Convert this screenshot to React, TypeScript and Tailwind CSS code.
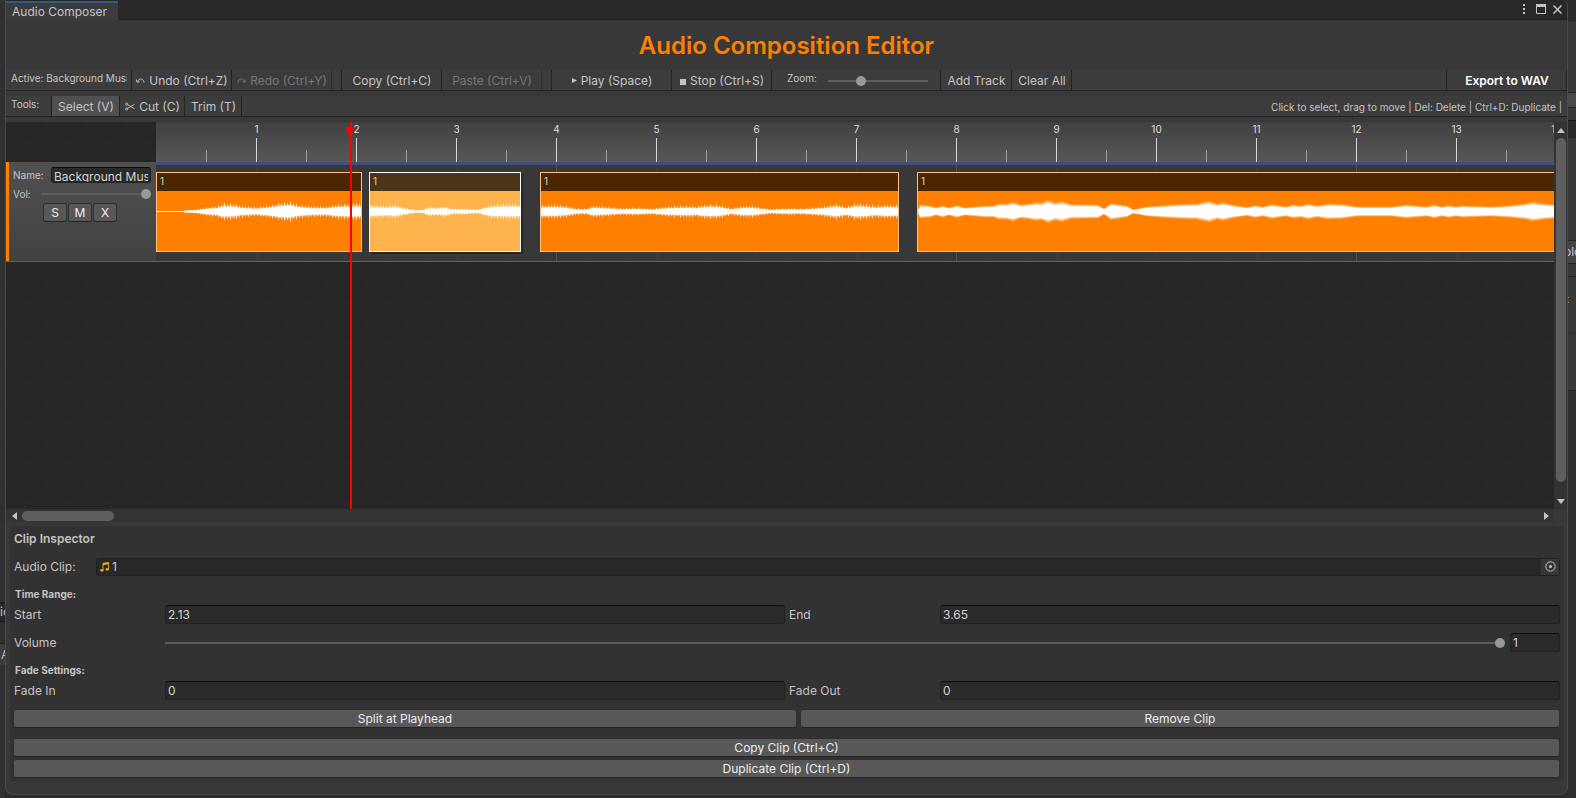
import { useState } from "react";
import type { ReactNode } from "react";

const PX_PER_SECOND = 100;

type Clip = {
  start: number;
  end: number;
  selected?: boolean;
  smooth?: boolean;
  // [x offset inside the clip, half height]
  wave: [number, number][];
};

const clips: Clip[] = [
  {
    start: 0,
    end: 2.06,
    wave: [[0, 0.5], [26, 0.5], [28, 1.5], [39, 2], [48, 4], [60, 5.5], [66, 8.5], [77, 8], [84, 6], [99, 4.5], [114, 6.5], [123, 9], [133, 10], [141, 7], [154, 5.5], [169, 5], [179, 7], [189, 8], [196, 8.5], [206, 8]],
  },
  {
    start: 2.13,
    end: 3.65,
    selected: true,
    wave: [[0, 7], [16, 6], [26, 7], [31, 5], [39, 3], [46, 1.5], [53, 2], [58, 5], [67, 4.5], [75, 5.5], [83, 3], [93, 3.5], [101, 2.5], [109, 2.5], [115, 5], [123, 7], [136, 8], [152, 7.5]],
  },
  {
    start: 3.84,
    end: 7.43,
    wave: [[0, 6.5], [15, 7], [25, 6], [35, 3.5], [45, 3], [52, 6], [65, 5], [80, 3.5], [95, 4], [110, 3], [125, 5], [140, 6], [150, 6], [155, 5], [160, 6.5], [170, 7.5], [180, 6.5], [190, 3.5], [200, 5.5], [210, 6], [220, 4], [230, 2.5], [237, 3], [250, 3.5], [260, 3], [272, 4], [285, 5.5], [295, 8], [305, 5], [315, 8.5], [325, 7.5], [335, 6], [345, 7], [359, 6.5]],
  },
  {
    start: 7.61,
    end: 20,
    smooth: true,
    wave: [[0, 1], [2, 7], [12, 6], [18, 4], [25, 6], [31, 4], [39, 6.5], [47, 4], [68, 6], [76, 6], [80, 8], [88, 8], [95, 10], [103, 7], [111, 8], [117, 9.5], [124, 9], [130, 12], [137, 9], [144, 10.5], [153, 7.5], [180, 7], [186, 3], [193, 8.5], [209, 6], [215, 2], [229, 5], [242, 6], [262, 7.5], [279, 8], [291, 11], [299, 8], [305, 9.5], [314, 7], [329, 4.5], [337, 6.5], [345, 5], [354, 7.5], [368, 5], [375, 7], [383, 6], [390, 8], [399, 6], [410, 8], [424, 7.5], [439, 5], [474, 5], [488, 7], [509, 5], [516, 7], [524, 5], [531, 6.5], [538, 5], [544, 6], [573, 5], [590, 6], [607, 8], [615, 10], [627, 8], [639, 7], [700, 6], [760, 8], [1239, 6]],
  },
];

const MID = 20.5;

function ampAt(wave: [number, number][], x: number) {
  for (let i = 1; i < wave.length; i++) {
    const [x1, y1] = wave[i];
    const [x0, y0] = wave[i - 1];
    if (x <= x1) return y0 + ((y1 - y0) * (x - x0)) / (x1 - x0);
  }
  return wave[wave.length - 1][1];
}

function outline(wave: [number, number][], scale: number) {
  const top = wave.map(([x, a]) => `${x},${MID - a * scale}`);
  const bottom = wave.map(([x, a]) => `${x},${MID + a * scale}`).reverse();
  return [...top, ...bottom].join(" ");
}

function Waveform({ clip, width }: { clip: Clip; width: number }) {
  const bars: { x: number; h: number }[] = [];
  if (!clip.smooth) {
    for (let x = 1; x < width; x += 3) {
      const a = ampAt(clip.wave, x);
      if (a > 1) bars.push({ x, h: a * (x % 2 ? 1 : 0.88) });
    }
  }
  return (
    <svg width={width} height="40" viewBox={`0 0 ${width} 40`} fill="white" aria-hidden="true">
      {clip.smooth ? (
        <>
          <polygon points={outline(clip.wave, 1)} opacity="0.2" />
          <polygon points={outline(clip.wave, 0.9)} opacity="0.3" />
          <polygon points={outline(clip.wave, 0.8)} opacity="0.5" />
          <polygon points={outline(clip.wave, 0.7)} />
        </>
      ) : (
        <>
          <polygon points={outline(clip.wave, 0.75)} opacity="0.3" />
          <polygon points={outline(clip.wave, 0.6)} />
          <rect x="0" y="20" width={width} height="1" />
          {bars.map((b) => (
            <rect key={b.x} x={b.x} y={MID - b.h} width="1" height={b.h * 2} opacity="0.75" />
          ))}
        </>
      )}
    </svg>
  );
}

function ClipView({ clip }: { clip: Clip }) {
  const width = Math.round((clip.end - clip.start) * PX_PER_SECOND);
  return (
    <div
      className={
        clip.selected
          ? "absolute top-[10px] h-20 overflow-hidden border border-white bg-[#ffb34d] shadow-[2px_2px_0_#262626]"
          : "absolute top-[10px] h-20 overflow-hidden border border-[#ffbf80] bg-[#ff8000]"
      }
      style={{ left: clip.start * PX_PER_SECOND, width }}
    >
      <div className="h-[18px] bg-black/70 px-[3px] text-[10px] leading-4 text-[#d2d2d2]">1</div>
      <Waveform clip={clip} width={width} />
    </div>
  );
}

function ToolButton({ className, children, disabled }: { className: string; children: ReactNode; disabled?: boolean }) {
  return (
    <button
      disabled={disabled}
      className={`flex h-5 shrink-0 items-center justify-center gap-1 border-r border-[#232323] pt-px pl-px whitespace-nowrap disabled:border-[#303030] disabled:text-[#757575] ${className}`}
    >
      {children}
    </button>
  );
}

function ActionButton({ className = "", children }: { className?: string; children: ReactNode }) {
  return (
    <button className={`h-[19px] rounded-[3px] border border-[#303030] border-b-[#242424] bg-[#585858] leading-[17px] text-[#eeeeee] ${className}`}>
      {children}
    </button>
  );
}

const field =
  "min-w-0 rounded-[3px] border border-[#212121] border-t-[#0d0d0d] bg-[#2a2a2a] px-[2px] text-xs text-[#d2d2d2] outline-none";
const range =
  "h-3 min-w-0 appearance-none bg-transparent bg-[linear-gradient(#5e5e5e,#5e5e5e)] bg-[length:100%_2px] bg-center bg-no-repeat outline-none [&::-webkit-slider-thumb]:size-[10px] [&::-webkit-slider-thumb]:appearance-none [&::-webkit-slider-thumb]:rounded-full [&::-webkit-slider-thumb]:bg-[#999999]";

function NumberField({ id, label, initial }: { id: string; label: string; initial: string }) {
  const [value, setValue] = useState(initial);
  return (
    <div className="flex flex-1 items-center">
      <label htmlFor={id} className="w-[151px] shrink-0">{label}</label>
      <input id={id} value={value} onChange={(e) => setValue(e.target.value)} className={`h-[19px] flex-1 ${field}`} />
    </div>
  );
}

function Ruler() {
  const marks = Array.from({ length: 28 }, (_, i) => (i + 1) / 2);
  return (
    <div className="relative h-10 overflow-hidden bg-linear-to-b from-[#404040] to-[#585858]">
      {marks.map((t) =>
        t % 1 === 0 ? (
          <div key={t} className="absolute inset-y-0 w-px" style={{ left: t * PX_PER_SECOND }}>
            <span className="flex justify-center text-[10px] leading-[14px] text-[#dddddd]">{t}</span>
            <span className="absolute bottom-0 left-0 h-6 w-px bg-[#d8d8d8]" />
          </div>
        ) : (
          <div key={t} className="absolute bottom-0 h-3 w-px bg-[#999999]" style={{ left: t * PX_PER_SECOND }} />
        )
      )}
    </div>
  );
}

function TrackHeader() {
  const [name, setName] = useState("Background Music");
  return (
    <div className="flex h-[99px] border-l-[3px] border-[#ff8000] bg-linear-to-b from-[#505050] to-[#424242] pt-[5px] pr-[5px] pl-1">
      <div className="flex min-w-0 flex-1 flex-col">
        <div className="flex items-center">
          <label htmlFor="track-name" className="w-[38px] text-[10px] leading-4">Name:</label>
          <input id="track-name" value={name} onChange={(e) => setName(e.target.value)} className={`h-4 flex-1 pt-[3px] ${field}`} />
        </div>
        <div className="mt-[5px] flex items-center">
          <label htmlFor="track-vol" className="w-7 text-[10px] leading-3">Vol:</label>
          <input id="track-vol" type="range" min="0" max="1" step="0.01" defaultValue="1" className={`flex-1 ${range}`} />
        </div>
        <div className="mt-[3px] flex gap-px pl-[30px]">
          {["S", "M", "X"].map((b) => (
            <ActionButton key={b} className="w-6">{b}</ActionButton>
          ))}
        </div>
      </div>
    </div>
  );
}

function Timeline() {
  const lines = Array.from({ length: 14 }, (_, i) => i + 1);
  return (
    <div className="flex min-h-0 flex-1 flex-col">
      <div className="flex flex-1">
        <div className="flex min-w-0 flex-1 bg-[#262626] [background-image:radial-gradient(circle_at_1px_1px,#2b2b2b_1px,transparent_1px),radial-gradient(circle_at_21px_21px,#2b2b2b_1px,transparent_1px)] [background-size:40px_40px]">
          <div className="w-[150px] shrink-0 pt-10">
            <TrackHeader />
            <div className="h-px bg-[#606060]" />
          </div>
          <div className="relative min-w-0 flex-1 overflow-hidden">
            <Ruler />
            <div className="relative h-[100px] overflow-hidden border-b border-[#606060] bg-[#383838]">
              {lines.map((n) => (
                <div
                  key={n}
                  className={n % 4 === 0 ? "absolute inset-y-0 w-px bg-[#505050]" : "absolute inset-y-0 w-px bg-[#3e3e3e]"}
                  style={{ left: n * PX_PER_SECOND }}
                />
              ))}
              <div className="relative h-[3px] bg-[#414f7a]" />
              {clips.map((c) => (
                <ClipView key={c.start} clip={c} />
              ))}
            </div>
            <div className="absolute inset-y-0 left-[194px] w-[2px] bg-[#ff0000]">
              <svg width="10" height="10" viewBox="0 0 10 10" className="absolute top-[5px] -left-[5px] max-w-none" aria-hidden="true">
                <path d="M0 0h10L5 10z" fill="#ff0000" />
              </svg>
            </div>
          </div>
        </div>
        <div className="flex w-[13px] shrink-0 flex-col items-center bg-[#333333]">
          <button aria-label="Scroll up" className="flex h-4 w-full items-center justify-center">
            <svg width="8" height="5" viewBox="0 0 8 5" aria-hidden="true"><path d="M4 0l4 5H0z" fill="#c4c4c4" /></svg>
          </button>
          <div className="w-[10px] flex-1 rounded-full bg-[#5f5f5f]" />
          <button aria-label="Scroll down" className="flex h-[27px] w-full items-center justify-center pt-3">
            <svg width="8" height="5" viewBox="0 0 8 5" aria-hidden="true"><path d="M4 5l4-5H0z" fill="#c4c4c4" /></svg>
          </button>
        </div>
      </div>
      <div className="mr-[13px] flex h-[13px] items-center bg-[#333333]">
        <button aria-label="Scroll left" className="flex h-full w-4 items-center justify-center">
          <svg width="5" height="8" viewBox="0 0 5 8" aria-hidden="true"><path d="M0 4l5-4v8z" fill="#c4c4c4" /></svg>
        </button>
        <div className="h-[10px] w-[92px] rounded-full bg-[#5f5f5f]" />
        <button aria-label="Scroll right" className="ml-auto flex h-full w-4 items-center justify-center">
          <svg width="5" height="8" viewBox="0 0 5 8" aria-hidden="true"><path d="M5 4L0 0v8z" fill="#c4c4c4" /></svg>
        </button>
      </div>
    </div>
  );
}

function Toolbar() {
  return (
    <div className="flex border-b border-[#232323] bg-[#3c3c3c]">
      <div className="w-[126px] shrink-0 border-r border-[#232323] pr-1 pl-[5px] text-[10px] leading-[17px]">
        <div className="overflow-hidden whitespace-nowrap">Active: Background Music</div>
      </div>
      <ToolButton className="w-[100px]">
        <svg width="9" height="5" viewBox="0 0 9 5" fill="none" stroke="currentColor" aria-hidden="true">
          <path d="M8 4.500C7.800.5 3 0 1.800 3M.5 1.500L1 4.300l2.600-.6" />
        </svg>
        Undo (Ctrl+Z)
      </ToolButton>
      <ToolButton className="w-[100px]" disabled>
        <svg width="9" height="5" viewBox="0 0 9 5" fill="none" stroke="currentColor" aria-hidden="true">
          <path d="M1 4.500C1.200.5 6 0 7.200 3M8.500 1.500L8 4.300l-2.600-.6" />
        </svg>
        Redo (Ctrl+Y)
      </ToolButton>
      <div className="w-[10px] shrink-0 border-r border-[#232323]" />
      <ToolButton className="w-[100px]">Copy (Ctrl+C)</ToolButton>
      <ToolButton className="w-[100px]" disabled>Paste (Ctrl+V)</ToolButton>
      <div className="w-[10px] shrink-0 border-r border-[#232323]" />
      <ToolButton className="w-[120px]">
        <svg width="5" height="5" viewBox="0 0 5 5" aria-hidden="true"><path d="M0 0l5 2.500L0 5z" fill="currentColor" /></svg>
        Play (Space)
      </ToolButton>
      <ToolButton className="w-[100px]">
        <svg width="6" height="6" viewBox="0 0 6 6" className="mt-[2px]" aria-hidden="true"><path d="M0 0h6v6H0z" fill="currentColor" /></svg>
        Stop (Ctrl+S)
      </ToolButton>
      <div className="flex w-[169px] shrink-0 border-r border-[#232323] pl-[15px]">
        <label htmlFor="zoom" className="w-[41px] text-[10px] leading-[17px]">Zoom:</label>
        <input id="zoom" type="range" min="0" max="100" defaultValue="31" className={`mt-[5px] w-[100px] ${range}`} />
      </div>
      <ToolButton className="w-[71px]">Add Track</ToolButton>
      <ToolButton className="w-[60px]">Clear All</ToolButton>
      <ToolButton className="ml-auto w-[121px] border-l font-semibold text-white">Export to WAV</ToolButton>
    </div>
  );
}

function ToolsRow() {
  return (
    <div className="mt-[5px] flex border-b border-[#232323] bg-[#3c3c3c]">
      <div className="w-[46px] shrink-0 border-r border-[#232323] pl-[5px] text-[10px] leading-[17px]">Tools:</div>
      <ToolButton className="w-[68px] bg-[#505050]">Select (V)</ToolButton>
      <ToolButton className="w-[65px]">
        <svg width="10" height="9" viewBox="0 0 11 9" fill="none" stroke="currentColor" aria-hidden="true">
          <path d="M3 2.500L10.500 7M3 6.500L10.500 2" />
          <circle cx="1.800" cy="1.800" r="1.200" />
          <circle cx="1.800" cy="7.200" r="1.200" />
        </svg>
        Cut (C)
      </ToolButton>
      <ToolButton className="w-[57px]">Trim (T)</ToolButton>
      <div className="ml-auto pt-[3px] pr-[5px] text-[10px] leading-4 whitespace-nowrap">
        Click to select, drag to move | Del: Delete | Ctrl+D: Duplicate |
      </div>
    </div>
  );
}

function Inspector() {
  const [volume, setVolume] = useState("1");
  return (
    <section className="mx-1 mt-1 flex flex-col bg-[#323232] pt-[5px] pr-[3px] pb-[3px] pl-1">
      <h2 className="leading-4 font-semibold">Clip Inspector</h2>
      <div className="mt-[10px] flex h-[19px] items-center">
        <span className="w-[82px] shrink-0">Audio Clip:</span>
        <div className="flex h-[18px] min-w-0 flex-1 items-center rounded-[3px] border border-[#212121] bg-[#282828] pl-[3px] text-[#d2d2d2]">
          <svg width="9" height="10" viewBox="0 0 9 10" aria-hidden="true">
            <path d="M3 8V1.500L8.500.5V7" fill="none" stroke="#e0a81c" />
            <path d="M3 1l5.500-.7v2L3 3.200z" fill="#e0a81c" />
            <ellipse cx="1.800" cy="8.300" rx="1.700" ry="1.400" fill="#e0a81c" />
            <ellipse cx="7.200" cy="7.300" rx="1.700" ry="1.400" fill="#e0a81c" />
          </svg>
          <span className="ml-[3px] flex-1">1</span>
          <button aria-label="Pick audio clip" className="flex h-full w-[18px] items-center justify-center bg-[#373737]">
            <svg width="11" height="11" viewBox="0 0 11 11" fill="none" aria-hidden="true">
              <circle cx="5.500" cy="5.500" r="4.700" stroke="#c4c4c4" />
              <circle cx="5.500" cy="5.500" r="1.500" fill="#c4c4c4" />
            </svg>
          </button>
        </div>
      </div>
      <h3 className="mt-[10px] pl-px text-[10px] leading-4 font-bold">Time Range:</h3>
      <div className="mt-[3px] flex gap-1">
        <NumberField id="start" label="Start" initial="2.13" />
        <NumberField id="end" label="End" initial="3.65" />
      </div>
      <div className="mt-[9px] flex items-center">
        <label htmlFor="volume" className="w-[151px] shrink-0">Volume</label>
        <input
          id="volume"
          type="range"
          min="0"
          max="1"
          step="0.01"
          value={volume}
          onChange={(e) => setVolume(e.target.value)}
          className={`flex-1 ${range}`}
        />
        <input aria-label="Volume value" value={volume} onChange={(e) => setVolume(e.target.value)} className={`ml-[5px] h-[19px] w-[50px] ${field}`} />
      </div>
      <h3 className="mt-[10px] pl-px text-[10px] leading-4 font-bold">Fade Settings:</h3>
      <div className="mt-[3px] flex gap-1">
        <NumberField id="fade-in" label="Fade In" initial="0" />
        <NumberField id="fade-out" label="Fade Out" initial="0" />
      </div>
      <div className="-ml-px flex flex-col">
        <div className="mt-[9px] flex gap-[3px]">
          <ActionButton className="flex-[784]">Split at Playhead</ActionButton>
          <ActionButton className="flex-[760]">Remove Clip</ActionButton>
        </div>
        <ActionButton className="mt-[10px]">Copy Clip (Ctrl+C)</ActionButton>
        <ActionButton className="mt-[2px]">Duplicate Clip (Ctrl+D)</ActionButton>
      </div>
    </section>
  );
}

export default function App() {
  return (
    <div className="flex min-h-screen bg-[#2c2c2c] font-['Inter',sans-serif] text-xs text-[#c4c4c4]">
      {/* slivers of the editor behind the floating window */}
      <div className="flex w-[5px] shrink-0 flex-col justify-end overflow-hidden bg-[#303030] pb-[133px]">
        <div className="flex h-5 items-center border-y border-[#1c1c1c] bg-[#282828]">ic</div>
        <div className="mt-[21px] flex h-[22px] items-center border-t border-[#232323] bg-[#3c3c3c] pl-px">A</div>
      </div>
      <div className="mb-[3px] flex min-w-0 flex-1 flex-col overflow-hidden rounded-b-lg rounded-tr-md border-x border-b border-[#4a4a4a] bg-[#383838]">
        <header className="flex h-5 border-b border-[#232323] bg-[#282828] pt-px">
          <div className="h-[19px] w-[112px] border-t-2 border-[#2c5d87] bg-[#3c3c3c] pl-[6px] leading-[18px]">Audio Composer</div>
          <div className="ml-auto flex items-center gap-[7px] pr-[5px] pb-[2px]">
            <button aria-label="Menu">
              <svg width="3" height="10" viewBox="0 0 3 10" fill="#c4c4c4" aria-hidden="true">
                <path d="M0 0h2v2H0zM0 4h2v2H0zM0 8h2v2H0z" />
              </svg>
            </button>
            <button aria-label="Maximize" className="pl-[3px]">
              <svg width="10" height="10" viewBox="0 0 10 10" fill="none" stroke="#c4c4c4" aria-hidden="true">
                <path d="M.5.5h9v9h-9z" />
                <path d="M0 1.500h10" strokeWidth="3" />
              </svg>
            </button>
            <button aria-label="Close">
              <svg width="9" height="9" viewBox="0 0 9 9" stroke="#c4c4c4" strokeWidth="1.500" aria-hidden="true">
                <path d="M.5.5l8 8M8.500.5l-8 8" />
              </svg>
            </button>
          </div>
        </header>
        <h1 className="flex h-[50px] items-center justify-center pt-[2px] text-2xl font-semibold text-[#ff8000]">Audio Composition Editor</h1>
        <Toolbar />
        <ToolsRow />
        <div className="mt-[5px] flex flex-1 flex-col">
          <Timeline />
        </div>
        <Inspector />
        <div className="h-[13px] shrink-0" />
      </div>
      <div className="flex w-2 shrink-0 flex-col overflow-hidden bg-[#383838]">
        <div className="h-[22px] bg-[#2c2c2c]" />
        <div className="mt-[70px] h-4 border-y border-[#232323] bg-[#4a4a4a]" />
        <div className="mt-3 h-[18px] border-t border-[#151515] bg-[#282828]" />
        <div className="mt-[102px] flex h-6 items-center border-y border-[#232323] bg-[#444444]"><span className="-ml-1">olo</span></div>
        <div className="mt-3 border-t border-[#232323] pt-3 leading-5"><span className="-ml-[2px]">:</span></div>
        <div className="mt-6 border-t border-[#2a2a2a]" />
        <div className="mt-14 flex-1 border-t border-[#232323] bg-[#2f2f2f]" />
      </div>
    </div>
  );
}
